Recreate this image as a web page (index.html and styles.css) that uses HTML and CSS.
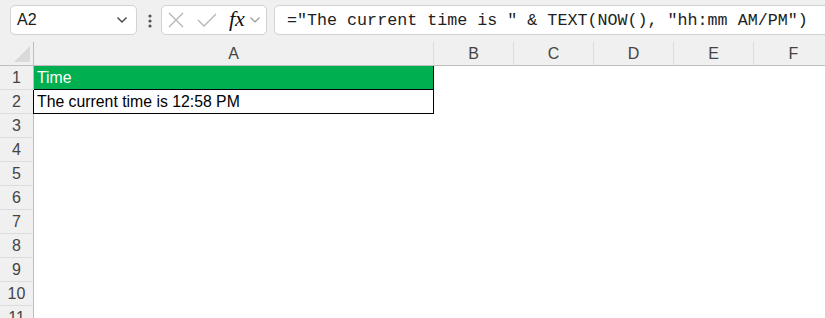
FILE: index.html
```html
<!DOCTYPE html>
<html lang="en">
  <head>
    <meta charset="utf-8">
    <title>Sheet1</title>
    <link rel="stylesheet" href="styles.css">
  </head>
  <body>
    <div class="toolbar">
      <div class="namebox">
        <span class="ref">A2</span>
        <svg class="chev" width="12" height="8" viewBox="0 0 12 8"><path d="M1.5 1.5 L6 6 L10.5 1.5" /></svg>
      </div>
      <svg class="dots" width="6" height="16" viewBox="0 0 6 16">
        <circle cx="3" cy="3" r="1.6" /><circle cx="3" cy="8" r="1.6" /><circle cx="3" cy="13" r="1.6" />
      </svg>
      <div class="fxbox">
        <svg class="icon" width="16" height="16" viewBox="0 0 16 16"><path d="M1 1 L15 15 M15 1 L1 15" /></svg>
        <svg class="icon" width="20" height="14" viewBox="0 0 20 14"><path d="M1 7 L7 13 L19 1" /></svg>
        <span class="fx">fx</span>
        <svg class="chev small" width="12" height="8" viewBox="0 0 12 8"><path d="M1.5 1.5 L6 6 L10.5 1.5" /></svg>
      </div>
      <div class="formula">="The current time is " &amp; TEXT(NOW(), "hh:mm AM/PM")</div>
    </div>

    <div class="sheet">
      <div class="corner"></div>
      <div class="colhead">A</div>
      <div class="colhead">B</div>
      <div class="colhead">C</div>
      <div class="colhead">D</div>
      <div class="colhead">E</div>
      <div class="colhead">F</div>

      <div class="rowhead">1</div>
      <div class="cell title">Time</div>
      <div class="cell"></div><div class="cell"></div><div class="cell"></div><div class="cell"></div><div class="cell"></div>

      <div class="rowhead">2</div>
      <div class="cell value">The current time is 12:58 PM</div>
      <div class="cell"></div><div class="cell"></div><div class="cell"></div><div class="cell"></div><div class="cell"></div>

      <div class="rowhead">3</div><div class="cell span"></div>
      <div class="rowhead">4</div><div class="cell span"></div>
      <div class="rowhead">5</div><div class="cell span"></div>
      <div class="rowhead">6</div><div class="cell span"></div>
      <div class="rowhead">7</div><div class="cell span"></div>
      <div class="rowhead">8</div><div class="cell span"></div>
      <div class="rowhead">9</div><div class="cell span"></div>
      <div class="rowhead">10</div><div class="cell span"></div>
      <div class="rowhead">11</div><div class="cell span"></div>
    </div>
  </body>
</html>
```

FILE: styles.css
```css
html, body { margin: 0; height: 100%; }
body {
  background: #f0f0f0;
  font-family: "Liberation Sans", Arial, sans-serif;
  overflow: hidden;
  width: 825px;
}

/* formula toolbar */
.toolbar {
  display: flex;
  align-items: flex-start;
  height: 42px;
  box-sizing: border-box;
  padding: 5px 0 0 10px;
  overflow: hidden;
}
.toolbar > * { flex-shrink: 0; }
.namebox, .fxbox, .formula {
  box-sizing: border-box;
  height: 30px;
  background: #fff;
  border: 1px solid #d2d2d2;
  border-radius: 5px;
  display: flex;
  align-items: center;
}
.namebox {
  width: 127px;
  padding: 0 8px 0 6px;
  justify-content: space-between;
}
.ref { font-size: 16px; color: #1a1a1a; }
.chev path { fill: none; stroke: #444; stroke-width: 1.4; }
.chev.small path { stroke: #999; stroke-width: 1.2; }
.dots { margin: 8px 0 0 10px; fill: #555; }
.fxbox {
  width: 106px;
  margin-left: 8px;
  padding-left: 6px;
}
.icon path { fill: none; stroke: #b4b4b4; stroke-width: 1.3; }
.icon + .icon { margin-left: 13px; }
.fx {
  font-family: "Liberation Serif", "Times New Roman", serif;
  font-style: italic;
  font-size: 22px;
  color: #111;
  margin-left: 12px;
  margin-top: -2px;
}
.chev.small { margin-left: 4px; }
.formula {
  width: 600px;
  margin-left: 7px;
  padding-left: 12px;
  font-family: "Liberation Mono", "DejaVu Sans Mono", monospace;
  font-size: 16.7px;
  color: #222;
  white-space: pre;
}

/* grid */
.sheet {
  display: grid;
  grid-template-columns: 34px 400px repeat(5, 80px);
  grid-auto-rows: 24px;
  background: #fff;
  width: 825px;
  overflow: hidden;
}
.corner, .colhead, .rowhead {
  background: #f0f0f0;
  box-sizing: border-box;
  color: #444;
  font-size: 16px;
  display: flex;
  align-items: center;
  justify-content: center;
}
.corner {
  border-right: 1px solid #bdbdbd;
  border-bottom: 1px solid #bdbdbd;
  position: relative;
}
.corner::after {
  content: "";
  position: absolute;
  right: 3px;
  bottom: 3px;
  border-style: solid;
  border-width: 0 0 16px 16px;
  border-color: transparent transparent #dadada transparent;
}
.colhead {
  border-right: 1px solid #dcdcdc;
  border-bottom: 1px solid #bdbdbd;
}
.rowhead {
  border-right: 1px solid #bdbdbd;
  border-bottom: 1px solid #dcdcdc;
}
.cell {
  box-sizing: border-box;
  font-size: 15.8px;
  display: flex;
  align-items: center;
  padding: 1px 0 0 3px;
  white-space: nowrap;
}
.cell.span { grid-column: 2 / -1; }
.title {
  background: #00b050;
  color: #fff;
  border-right: 1px solid #000;
  border-bottom: 1px solid #000;
}
.value {
  color: #000;
  border-right: 1px solid #000;
  border-bottom: 1px solid #000;
  box-shadow: -1px 0 0 #000;
}
```
